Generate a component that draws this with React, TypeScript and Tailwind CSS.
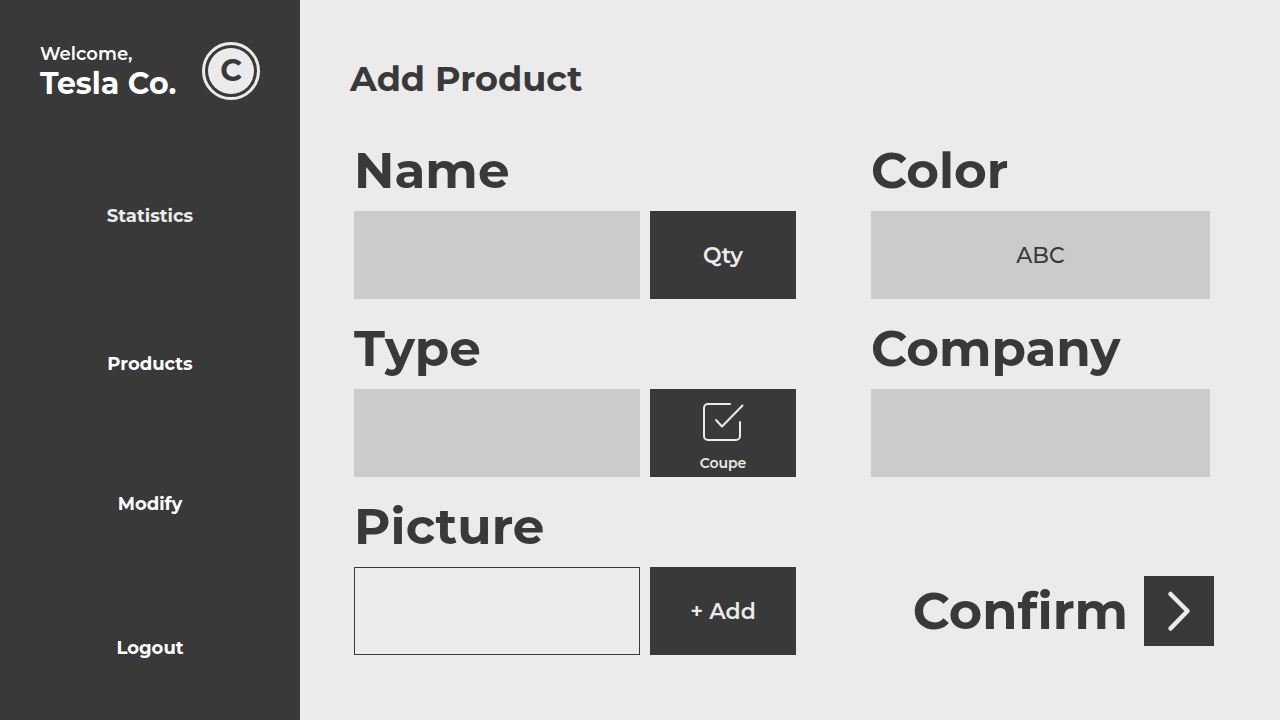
import React from "react";

const navItems = [
  { label: "Statistics", spacing: "mt-0", tone: "text-[#ebebeb]" },
  { label: "Products", spacing: "mt-[120px]", tone: "text-white" },
  { label: "Modify", spacing: "mt-28", tone: "text-white" },
  { label: "Logout", spacing: "mt-[116px]", tone: "text-white" },
];

const fieldBox = "h-22 w-full min-w-0 bg-[#cbcbcb] px-4 text-center text-[22px] font-medium text-[#393939] outline-none";
const darkBox = "h-22 w-[146px] shrink-0 bg-[#393939] text-center text-[22px] font-semibold text-[#ebebeb]";

function Field({ id, label, children }: { id: string; label: string; children: React.ReactNode }) {
  return (
    <div>
      <label htmlFor={id} className="mb-5 block text-[50px] leading-10 font-bold">
        {label}
      </label>
      <div className="flex gap-2.5">{children}</div>
    </div>
  );
}

function Sidebar() {
  return (
    <aside className="w-[300px] shrink-0 bg-[#393939] text-white">
      <div className="flex items-start justify-between px-10 pt-[42px]">
        <div className="whitespace-nowrap">
          <p className="text-lg leading-6 font-semibold">Welcome,</p>
          <p className="text-[30px] leading-9 font-bold">Tesla Co.</p>
        </div>
        <div className="size-[58px] shrink-0 rounded-full border-[3px] border-[#ebebeb] p-[3px]">
          <div className="flex size-full items-center justify-center rounded-full bg-[#ebebeb] text-[30px] leading-none font-bold text-[#393939]">
            C
          </div>
        </div>
      </div>
      <nav className="flex flex-col items-center pt-[100px] pb-10">
        {navItems.map((item) => (
          <a key={item.label} href="#" className={`${item.spacing} ${item.tone} text-lg leading-7 font-bold`}>
            {item.label}
          </a>
        ))}
      </nav>
    </aside>
  );
}

export default function App() {
  return (
    <div className="flex min-h-screen bg-[#ebebeb] font-['Montserrat','Inter',sans-serif] text-[#393939]">
      <Sidebar />
      <main className="min-w-0 flex-1 pt-[59px] pr-[70px] pb-10 pl-[50px]">
        <h1 className="text-[35px] leading-10 font-bold">Add Product</h1>
        <form
          className="mt-[52px] ml-1 grid grid-cols-[442fr_339fr] gap-x-[75px] gap-y-[30px]"
          onSubmit={(e) => e.preventDefault()}
        >
          <Field id="name" label="Name">
            <input id="name" type="text" className={fieldBox} />
            <input aria-label="Quantity" type="text" placeholder="Qty" className={`${darkBox} outline-none placeholder:text-[#ebebeb]`} />
          </Field>
          <Field id="color" label="Color">
            <input id="color" type="text" defaultValue="ABC" className={fieldBox} />
          </Field>
          <Field id="type" label="Type">
            <input id="type" type="text" className={fieldBox} />
            <label className="flex h-22 w-[146px] shrink-0 cursor-pointer flex-col items-center bg-[#393939] pt-3 text-[#ebebeb]">
              <input type="checkbox" defaultChecked className="sr-only" />
              <svg viewBox="0 0 42 42" className="size-[42px]" fill="none" stroke="currentColor" strokeWidth="2" strokeLinecap="round" strokeLinejoin="round" aria-hidden="true">
                <path d="M28 3H6a4 4 0 0 0-4 4v28a4 4 0 0 0 4 4h28a4 4 0 0 0 4-4V21" />
                <path d="M14 19l6 6.500L40.500 4.500" />
              </svg>
              <span className="mt-2 text-sm leading-6 font-semibold">Coupe</span>
            </label>
          </Field>
          <Field id="company" label="Company">
            <input id="company" type="text" className={fieldBox} />
          </Field>
          <Field id="picture" label="Picture">
            <input id="picture" type="text" readOnly className="h-22 w-full min-w-0 border border-[#393939] px-4 outline-none" />
            <button type="button" className={darkBox}>
              + Add
            </button>
          </Field>
          <div className="-mr-1 flex h-22 items-center justify-end gap-4 self-end">
            <label htmlFor="confirm" className="text-[51px] leading-10 font-bold">
              Confirm
            </label>
            <button id="confirm" type="submit" aria-label="Confirm" className="flex size-[70px] shrink-0 items-center justify-center bg-[#393939] text-[#ebebeb]">
              <svg viewBox="0 0 70 70" className="size-full" fill="none" stroke="currentColor" strokeWidth="4.500" strokeLinecap="round" strokeLinejoin="round" aria-hidden="true">
                <path d="M26.500 18L43.500 35L26.500 52.500" />
              </svg>
            </button>
          </div>
        </form>
      </main>
    </div>
  );
}
